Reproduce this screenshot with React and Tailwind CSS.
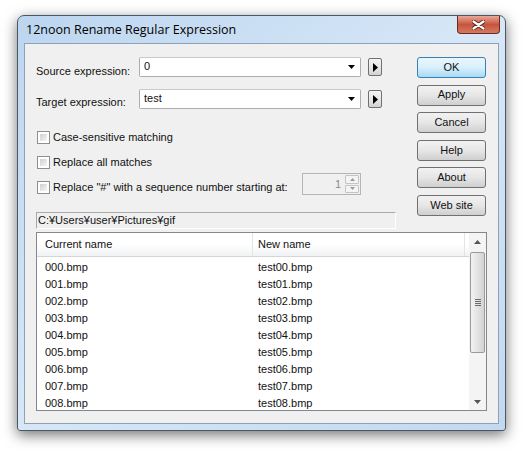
import React from "react";

const files = ["000", "001", "002", "003", "004", "005", "006", "007", "008"];
const buttons = ["OK", "Apply", "Cancel", "Help", "About", "Web site"];

function DropArrow() {
  return (
    <svg width="7" height="4" viewBox="0 0 7 4" className="block">
      <path d="M0 0h7L3.5 4z" fill="#000" />
    </svg>
  );
}

function Combo({ value }) {
  return (
    <div className="flex h-[20px] w-[222px] items-center justify-between rounded-[2px] border border-[#abadb3] border-t-[#c8cace] bg-white pl-[4px] pr-[5px]">
      <span className="-mt-[2px] leading-[14px]">{value}</span>
      <DropArrow />
    </div>
  );
}

function ArrowBtn() {
  return (
    <div className="ml-[7px] mt-[1px] flex h-[18px] w-[14px] items-center justify-center rounded-[2px] border border-[#707070] bg-gradient-to-b from-[#f3f3f3] via-[#e8e8e8] to-[#d2d2d2]">
      <svg width="5" height="9" viewBox="0 0 5 9" className="block">
        <path d="M0 0l5 4.5L0 9z" fill="#000" />
      </svg>
    </div>
  );
}

function Check({ label, className = "" }) {
  return (
    <div className={"flex h-[13px] items-center " + className}>
      <div className="h-[13px] w-[13px] border border-[#8e8f8f] bg-white p-[2px]">
        <div className="h-full w-full bg-gradient-to-br from-[#cbcfd5] to-[#f6f6f6]" />
      </div>
      <span className="ml-[3px] leading-[13px]">{label}</span>
    </div>
  );
}

export default function App() {
  return (
    <div
      className="h-[451px] w-[527px] overflow-hidden bg-white text-[11px] text-[#111]"
      style={{ fontFamily: '"Liberation Sans", Arial, sans-serif' }}
    >
      <div className="ml-[17px] mt-[15px] flex h-[416px] w-[489px] flex-col rounded-t-[7px] rounded-b-[3px] border border-[#4a5866] bg-gradient-to-br from-[#bcd6f0] via-[#d7e7f7] to-[#c2d9f0] px-[6px] pb-[6px] shadow-[0_4px_14px_rgba(0,0,0,0.55)]">
        {/* title bar */}
        <div className="flex h-[27px] items-start justify-between">
          <span
            className="mt-[8px] ml-[2px] leading-none text-black"
            style={{ fontFamily: '"Open Sans", "Noto Sans", sans-serif', fontSize: "12.5px" }}
          >
            12noon Rename Regular Expression
          </span>
          <div className="-mr-[1px] flex h-[18px] w-[43px] items-center justify-center rounded-b-[4px] border border-t-0 border-[#6b2a20] bg-gradient-to-b from-[#e8a89a] via-[#c7543d] to-[#d6785f]">
            <svg width="13" height="10" viewBox="0 0 13 10" className="block">
              <path d="M1.5 1.5l10 7M11.5 1.5l-10 7" stroke="#5a2318" strokeWidth="4" strokeLinecap="round" />
              <path d="M1.5 1.5l10 7M11.5 1.5l-10 7" stroke="#fff" strokeWidth="2.2" strokeLinecap="round" />
            </svg>
          </div>
        </div>

        {/* client area */}
        <div className="flex flex-1 flex-col border border-[#8da2b8] bg-[#f0f0f0] pl-[11px] pr-[12px] pt-[13px]">
          <div className="flex">
            <div className="w-[360px]">
              <div className="flex h-[20px]">
                <span className="w-[103px] pt-[8px] leading-[13px]">Source expression:</span>
                <Combo value="0" />
                <ArrowBtn />
              </div>
              <div className="mt-[12px] flex h-[20px]">
                <span className="w-[103px] pt-[7px] leading-[13px]">Target expression:</span>
                <Combo value="test" />
                <ArrowBtn />
              </div>
              <Check label="Case-sensitive matching" className="ml-[1px] mt-[22px]" />
              <Check label="Replace all matches" className="ml-[1px] mt-[12px]" />
              <div className="mt-[4px] flex items-start">
                <Check label={'Replace "#" with a sequence number starting at:'} className="ml-[1px] mt-[8px]" />
                <div className="ml-auto mr-[35px] flex h-[22px] w-[59px] border border-[#b5b5b5] bg-[#f0f0f0]">
                  <span className="flex-1 pr-[3px] pt-[3px] text-right leading-[14px] text-[#8d8d8d]">1</span>
                  <div className="flex w-[16px] flex-col gap-[1px] p-[1px]">
                    <div className="flex flex-1 items-center justify-center rounded-[1px] border border-[#c4c4c4] bg-[#f4f4f4]">
                      <svg width="5" height="3" viewBox="0 0 5 3" className="block"><path d="M0 3h5L2.5 0z" fill="#9a9a9a" /></svg>
                    </div>
                    <div className="flex flex-1 items-center justify-center rounded-[1px] border border-[#c4c4c4] bg-[#f4f4f4]">
                      <svg width="5" height="3" viewBox="0 0 5 3" className="block"><path d="M0 0h5L2.5 3z" fill="#9a9a9a" /></svg>
                    </div>
                  </div>
                </div>
              </div>
              <div className="mt-[17px] h-[17px] w-[360px] border border-[#a9a9a9] border-b-white border-r-white pl-[1px] leading-[15px]">
                C:¥Users¥user¥Pictures¥gif
              </div>
            </div>
            <div className="ml-[21px] flex w-[71px] flex-col gap-[6.6px]">
              {buttons.map((b, i) => (
                <div
                  key={b}
                  className={
                    "flex h-[21px] items-center justify-center rounded-[3px] border pb-[1px] " +
                    (i === 0
                      ? "border-[#3c7fb1] bg-gradient-to-b from-[#eaf6fd] via-[#d9f0fc] to-[#a7d9f5]"
                      : "border-[#707070] bg-gradient-to-b from-[#f2f2f2] via-[#e6e6e6] to-[#cfcfcf]")
                  }
                >
                  {b}
                </div>
              ))}
            </div>
          </div>

          {/* list view */}
          <div className="mt-[3px] flex h-[179px] w-[451px] border border-[#828790] bg-white">
            <div className="flex-1 overflow-hidden">
              <div className="flex h-[24px] border-b border-[#d5d5d5] bg-gradient-to-b from-white via-white to-[#f1f2f4]">
                <div className="flex w-[216px] items-center border-r border-[#e3e4e6] pl-[8px] pb-[1px]">Current name</div>
                <div className="flex w-[212px] items-center border-r border-[#e3e4e6] pl-[5px] pb-[1px]">New name</div>
              </div>
              <div className="pt-[2px]">
                {files.map((f) => (
                  <div key={f} className="flex h-[17px] items-center">
                    <span className="w-[221px] pl-[8px]">{f}.bmp</span>
                    <span>test{f.slice(1)}.bmp</span>
                  </div>
                ))}
              </div>
            </div>
            <div className="flex w-[17px] flex-col bg-[#f4f4f4]">
              <div className="flex h-[17px] items-center justify-center">
                <svg width="7" height="4" viewBox="0 0 7 4" className="block"><path d="M0 4h7L3.5 0z" fill="#555" /></svg>
              </div>
              <div className="mx-[1px] mt-[2px] flex h-[101px] items-center justify-center rounded-[2px] border border-[#9a9a9a] bg-gradient-to-r from-[#f2f2f2] via-[#e3e3e3] to-[#d3d3d3]">
                <div className="flex flex-col gap-[1px]">
                  <div className="h-[1px] w-[6px] bg-[#6a6a6a]" />
                  <div className="h-[1px] w-[6px] bg-[#6a6a6a]" />
                  <div className="h-[1px] w-[6px] bg-[#6a6a6a]" />
                  <div className="h-[1px] w-[6px] bg-[#6a6a6a]" />
                </div>
              </div>
              <div className="mt-auto flex h-[17px] items-center justify-center">
                <svg width="7" height="4" viewBox="0 0 7 4" className="block"><path d="M0 0h7L3.5 4z" fill="#555" /></svg>
              </div>
            </div>
          </div>
        </div>
      </div>
    </div>
  );
}
